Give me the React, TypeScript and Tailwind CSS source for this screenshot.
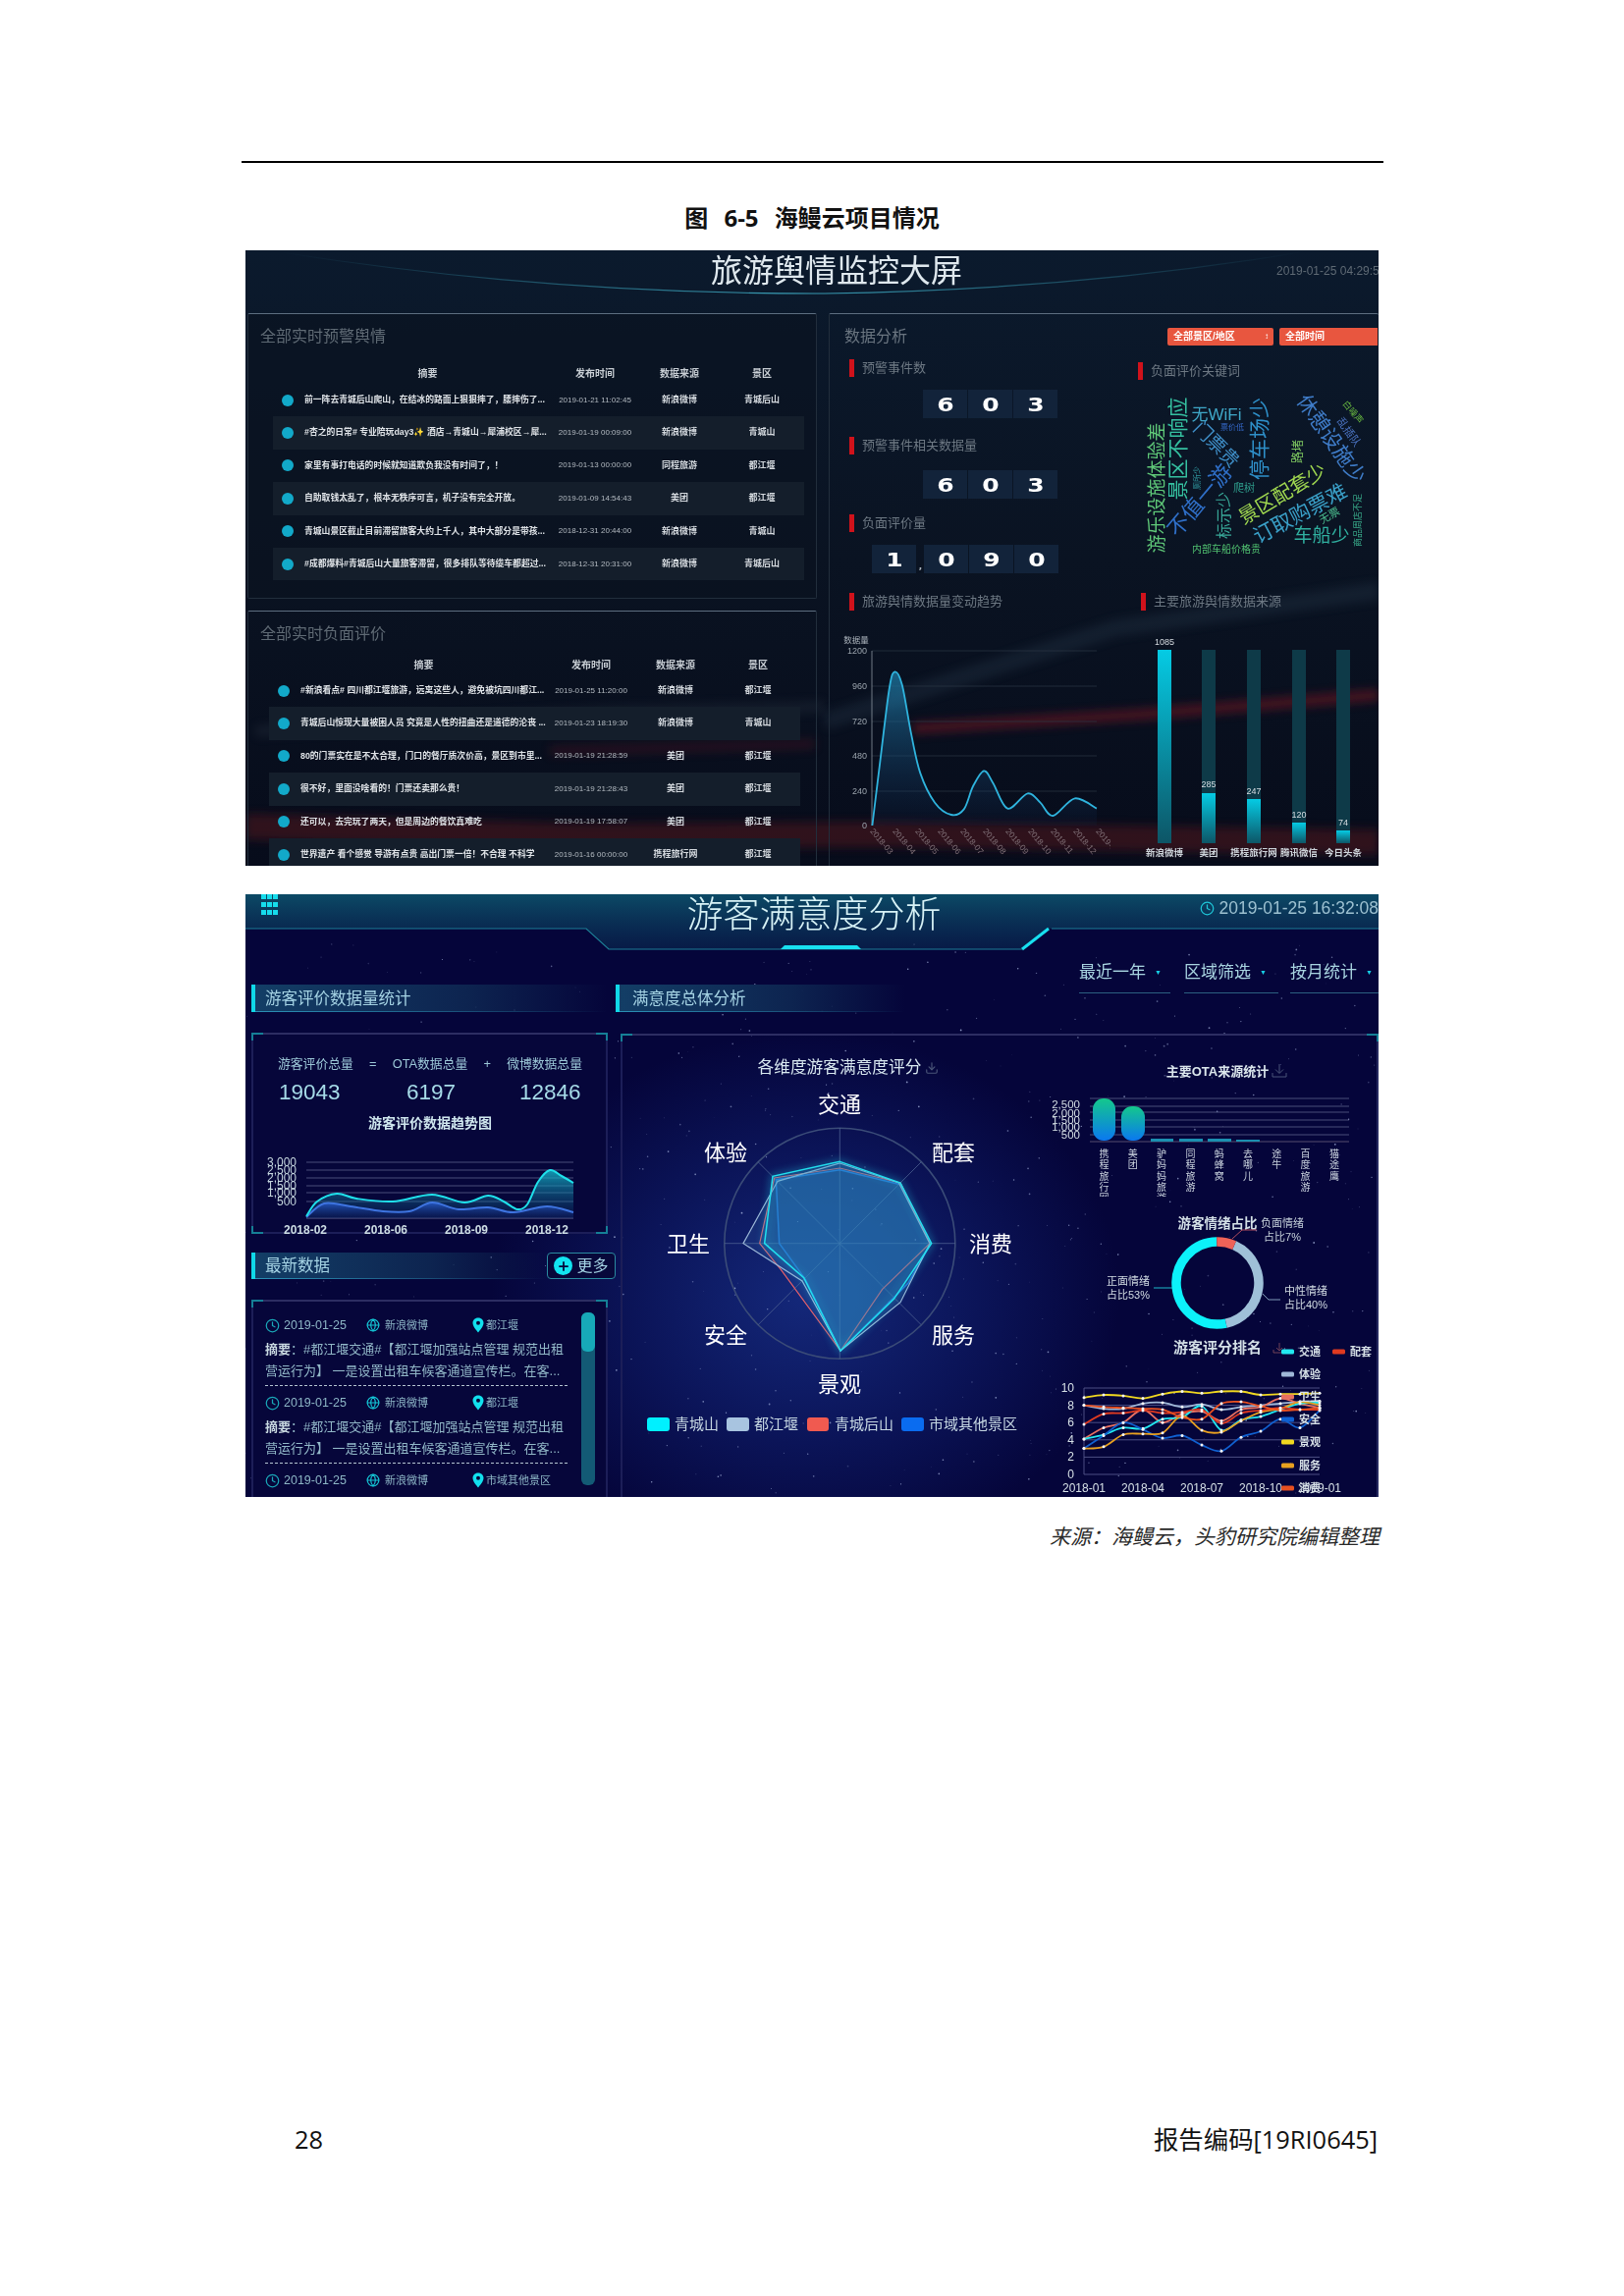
import React from "react";
import { Clock, Globe, Plus, Download } from "lucide-react";

type Pt = [number, number];

// catmull-rom through the points, good enough for echarts style smooth lines
function smooth(pts: Pt[]) {
  let d = `M${pts[0][0]} ${pts[0][1]}`;
  for (let i = 0; i < pts.length - 1; i++) {
    const p0 = pts[i - 1] || pts[i];
    const p1 = pts[i];
    const p2 = pts[i + 1];
    const p3 = pts[i + 2] || p2;
    const c1x = p1[0] + (p2[0] - p0[0]) / 6;
    const c1y = p1[1] + (p2[1] - p0[1]) / 6;
    const c2x = p2[0] - (p3[0] - p1[0]) / 6;
    const c2y = p2[1] - (p3[1] - p1[1]) / 6;
    d += ` C${c1x} ${c1y} ${c2x} ${c2y} ${p2[0]} ${p2[1]}`;
  }
  return d;
}

const warnRows = [
  ["前一阵去青城后山爬山，在结冰的路面上狠狠摔了，腰摔伤了...", "2019-01-21 11:02:45", "新浪微博", "青城后山"],
  ["#杏之的日常# 专业陪玩day3✨ 酒店→青城山→犀浦校区→犀...", "2019-01-19 00:09:00", "新浪微博", "青城山"],
  ["家里有事打电话的时候就知道欺负我没有时间了，！", "2019-01-13 00:00:00", "同程旅游", "都江堰"],
  ["自助取钱太乱了，根本无秩序可言，机子没有完全开放。", "2019-01-09 14:54:43", "美团", "都江堰"],
  ["青城山景区截止目前滞留旅客大约上千人，其中大部分是带孩...", "2018-12-31 20:44:00", "新浪微博", "青城山"],
  ["#成都爆料#青城后山大量旅客滞留，很多排队等待缆车都超过...", "2018-12-31 20:31:00", "新浪微博", "青城后山"],
];

const negRows = [
  ["#新浪看点# 四川都江堰旅游，远离这些人，避免被坑四川都江...", "2019-01-25 11:20:00", "新浪微博", "都江堰"],
  ["青城后山惊现大量被困人员 究竟是人性的扭曲还是道德的沦丧 ...", "2019-01-23 18:19:30", "新浪微博", "青城山"],
  ["80的门票实在是不太合理，门口的餐厅质次价高，景区到市里...", "2019-01-19 21:28:59", "美团", "都江堰"],
  ["很不好，里面没啥看的！门票还卖那么贵！", "2019-01-19 21:28:43", "美团", "都江堰"],
  ["还可以，去完玩了两天，但是周边的餐饮真难吃", "2019-01-19 17:58:07", "美团", "都江堰"],
  ["世界遗产 看个感觉 导游有点贵 高出门票一倍！不合理 不科学", "2019-01-16 00:00:00", "携程旅行网", "都江堰"],
];

const cloud: { t: string; x: number; y: number; s: number; r: number; c: string }[] = [
  { t: "游乐设施体验差", x: 1177, y: 497, s: 19, r: -90, c: "#5fc878" },
  { t: "景区不响应", x: 1198, y: 457, s: 21, r: -90, c: "#35c0a0" },
  { t: "无WiFi", x: 1238, y: 422, s: 17, r: 0, c: "#3fa8c8" },
  { t: "票价低", x: 1254, y: 435, s: 8, r: 0, c: "#3468c8" },
  { t: "门票贵", x: 1238, y: 453, s: 19, r: 45, c: "#3f8fc8" },
  { t: "不值一游", x: 1221, y: 510, s: 22, r: -50, c: "#2f6fc8" },
  { t: "标示少", x: 1245, y: 525, s: 16, r: -90, c: "#38a898" },
  { t: "厕所少", x: 1218, y: 487, s: 8, r: -90, c: "#3098a0" },
  { t: "爬树", x: 1266, y: 497, s: 11, r: 0, c: "#2e9a8a" },
  { t: "停车场少", x: 1281, y: 447, s: 21, r: -90, c: "#2e8fc8" },
  { t: "路堵", x: 1321, y: 460, s: 12, r: -90, c: "#7ec860" },
  { t: "休憩设施少", x: 1355, y: 447, s: 21, r: 55, c: "#3f7cc8" },
  { t: "乱插队", x: 1373, y: 440, s: 11, r: 55, c: "#4a72c0" },
  { t: "白噪声", x: 1377, y: 420, s: 9, r: 50, c: "#68b840" },
  { t: "景区配套少", x: 1305, y: 503, s: 20, r: -31, c: "#a0d850" },
  { t: "订取购票难", x: 1323, y: 523, s: 21, r: -28, c: "#3aa0c8" },
  { t: "无票", x: 1353, y: 525, s: 11, r: -30, c: "#4cc090" },
  { t: "车船少", x: 1345, y: 545, s: 19, r: 0, c: "#30b0a0" },
  { t: "内部车船价格贵", x: 1248, y: 559, s: 10, r: 0, c: "#50c070" },
  { t: "商品周店不足", x: 1382, y: 530, s: 9, r: -90, c: "#38a888" },
];

const trendZoom: Pt[] = [
  [128, 720], [150, 520], [175, 300], [190, 250], [210, 290], [235, 440], [260, 560], [300, 650], [345, 687],
  [380, 670], [405, 600], [435, 553], [460, 590], [500, 668], [555, 622], [590, 650], [625, 690], [685, 637], [745, 668],
];
const trendPts: Pt[] = trendZoom.map(([x, y]) => [840 + x / 2.7, 600 + y / 3]);

const sourceBars = [
  { name: "新浪微博", v: "1085", x: 1185, top: 661, ly: 656 },
  { name: "美团", v: "285", x: 1230, top: 807, ly: 801 },
  { name: "携程旅行网", v: "247", x: 1276, top: 813, ly: 808 },
  { name: "腾讯微信", v: "120", x: 1322, top: 837, ly: 832 },
  { name: "今日头条", v: "74", x: 1367, top: 845, ly: 840 },
];

const trendMonths = ["2018-03", "2018-04", "2018-05", "2018-06", "2018-07", "2018-08", "2018-09", "2018-10", "2018-11", "2018-12", "2019-01"];

const scoreSeries: { c: string; v: number[] }[] = [
  { c: "#f0d820", v: [8.9, 9.2, 9.1, 8.8, 9.3, 9.6, 9.4, 9.6, 9.6, 9.2, 9.3, 9.3, 9.4] },
  { c: "#a0b8d8", v: [8, 7.6, 7.6, 8.2, 8.3, 7.8, 8.1, 7.5, 7.8, 8, 8.2, 8.4, 8.5] },
  { c: "#e87060", v: [4.1, 5.4, 6, 7.5, 6, 7, 7.3, 6.2, 7.5, 7.8, 8.8, 8.2, 7.7] },
  { c: "#22e8f0", v: [4.1, 4.6, 5.4, 5.3, 6.4, 6.6, 7.9, 5.1, 6.3, 6.7, 7.5, 8.2, 8.3] },
  { c: "#1060d0", v: [3, 4.5, 6, 5.2, 4.2, 4.5, 3.4, 2.7, 4.3, 5, 6.4, 5.4, 7.4] },
  { c: "#e8a020", v: [3, 3.2, 4.6, 4.7, 4.8, 6.8, 5.1, 4.9, 6.2, 7.2, 7.6, 8.4, 8] },
  { c: "#e03a20", v: [5.8, 7, 7.1, 7.4, 7.1, 7.2, 7.5, 5.9, 7.1, 7.4, 7.7, 7.5, 7.5] },
  { c: "#e85020", v: [8, 7.8, 7.7, 7.6, 7.5, 6.6, 6.4, 8.2, 8.4, 7.9, 7.4, 7.5, 7.7] },
];

const scoreLegend = [
  { t: "交通", x: 1303, y: 1377, c: "#22e8f0" },
  { t: "配套", x: 1355, y: 1377, c: "#e03a20" },
  { t: "体验", x: 1303, y: 1400, c: "#a0b8d8" },
  { t: "卫生", x: 1303, y: 1423, c: "#e87060" },
  { t: "安全", x: 1303, y: 1446, c: "#1060d0" },
  { t: "景观", x: 1303, y: 1469, c: "#f0d820" },
  { t: "服务", x: 1303, y: 1493, c: "#e8a020" },
  { t: "消费", x: 1303, y: 1516, c: "#e85020" },
];

const radarLabels = [
  { t: "交通", x: 853, y: 1125 },
  { t: "配套", x: 969, y: 1174 },
  { t: "消费", x: 1007, y: 1267 },
  { t: "服务", x: 969, y: 1360 },
  { t: "景观", x: 853, y: 1410 },
  { t: "安全", x: 737, y: 1360 },
  { t: "卫生", x: 699, y: 1267 },
  { t: "体验", x: 737, y: 1174 },
];

const radarShapes: { c: string; w: number; fill: string; p: Pt[] }[] = [
  { c: "#1f6fe0", w: 1.5, fill: "#2f6fc0", p: [[670, 455], [855, 500], [948, 680], [880, 800], [672, 1008], [565, 790], [485, 680], [475, 485]] },
  { c: "#e8606a", w: 1.2, fill: "#2f6fc0", p: [[670, 450], [855, 495], [945, 680], [800, 820], [672, 1008], [490, 760], [425, 680], [470, 480]] },
  { c: "#9db8d8", w: 1.2, fill: "#3c78b8", p: [[670, 435], [850, 495], [945, 680], [855, 860], [672, 1008], [555, 795], [375, 680], [480, 490]] },
  { c: "#22dfee", w: 1.5, fill: "#2f78b0", p: [[670, 430], [855, 495], [950, 680], [835, 850], [672, 1008], [560, 785], [440, 680], [465, 475]] },
];

const radarPoints = (p: Pt[]) => p.map(([x, y]) => `${630 + x / 3},${1040 + y / 3}`).join(" ");

const otaLabels = ["携程旅行网", "美团", "驴妈妈旅游", "同程旅游", "蚂蜂窝", "去哪儿", "途牛", "百度旅游", "猫途鹰"];

const cyanCurve: Pt[] = [
  [312, 1237], [323, 1222], [343, 1214], [363, 1219], [400, 1222], [440, 1215], [473, 1223], [497, 1216], [513, 1222], [527, 1230],
  [537, 1225], [548, 1202], [560, 1190], [572, 1196], [584, 1203],
];
const blueCurve: Pt[] = [
  [312, 1238], [330, 1224], [357, 1227], [390, 1232], [417, 1232], [440, 1223], [467, 1230], [497, 1228], [523, 1233], [557, 1227], [584, 1233],
];

const feedItems = [
  { place: "都江堰" },
  { place: "都江堰" },
  { place: "市域其他景区" },
];

// seeded stars so every render gives the same sky
const stars: { x: number; y: number; r: number; o: number }[] = [];
let seed = 7;
const rnd = () => {
  seed = (seed * 16807) % 2147483647;
  return seed / 2147483647;
};
for (let i = 0; i < 620; i++) {
  stars.push({ x: rnd() * 1154, y: 50 + rnd() * 564, r: 0.3 + rnd() * 0.6, o: 0.2 + rnd() * 0.55 });
}

function Panel({ className, children }: { className?: string; children: React.ReactNode }) {
  return (
    <div className={`rounded-[2px] border border-[#222e3c] border-t-[#5d6e80] ${className || ""}`}>{children}</div>
  );
}

function RowsTable({ rows, rowClass, headGap }: { rows: string[][]; rowClass: string; headGap: string }) {
  const cols = "grid grid-cols-[32px_251px_90px_82px_86px] items-center";
  return (
    <div className={rowClass}>
      <div className={`${cols} h-[16px] text-[10px] font-bold text-[#c8ced4] text-center`}>
        <span />
        <span>摘要</span>
        <span>发布时间</span>
        <span>数据来源</span>
        <span>景区</span>
      </div>
      <div className={headGap}>
        {rows.map((r, i) => (
          <div key={i} className={`${cols} h-[33.4px] text-[9px] text-[#d4d9de] text-center ${i % 2 === 1 ? "bg-[#141e2b]" : ""}`}>
            <span className="ml-[9px] w-[12px] h-[12px] rounded-full bg-[#12a9c9]" />
            <span className="text-left truncate font-bold text-[8.8px] text-[#dfe3e7]">{r[0]}</span>
            <span className="text-[8px] text-[#b4bbc2]">{r[1]}</span>
            <span className="font-bold">{r[2]}</span>
            <span className="font-bold">{r[3]}</span>
          </div>
        ))}
      </div>
    </div>
  );
}

function SubHead({ label, className }: { label: string; className?: string }) {
  return (
    <div className={`flex items-center gap-[8px] text-[13px] text-[#6d7883] ${className || ""}`}>
      <span className="w-[5px] h-[18px] bg-[#d0121b]" />
      <span>{label}</span>
    </div>
  );
}

function Digits({ value, className }: { value: string; className?: string }) {
  return (
    <div className={`flex items-end font-[DejaVu_Sans,sans-serif] font-bold text-[20px] text-white ${className || ""}`}>
      {value.split("").map((d, i) =>
        d === "," ? (
          <span key={i} className="w-[7px] text-[9px] text-center text-[#aab4bd]">,</span>
        ) : (
          <span key={i} className="w-[45px] h-[29px] mr-[1px] flex items-center justify-center bg-[#12233a]">
            <span className="scale-x-[1.25]">{d}</span>
          </span>
        )
      )}
    </div>
  );
}

function SectionHead({ label, className }: { label: string; className?: string }) {
  return (
    <div className={`flex items-center border-l-[4px] border-l-[#10d8e8] bg-[linear-gradient(to_right,#2a8fb5,transparent),linear-gradient(to_right,#133e66,#0d2450_60%,transparent)] bg-[length:100%_1px,100%_100%] bg-[position:bottom,center] bg-no-repeat text-[16.5px] text-[#a5d3e4] ${className || ""}`}>
      {label}
    </div>
  );
}

function Frame({ className, children }: { className?: string; children: React.ReactNode }) {
  return (
    <div className={`relative border-2 border-[#1c1e58] border-t-[#2c2d62] ${className || ""}`}>
      <span className="absolute -top-[2px] -left-[2px] w-[12px] h-[8px] border-t-2 border-l-2 border-[#157f96]" />
      <span className="absolute -top-[2px] -right-[2px] w-[12px] h-[8px] border-t-2 border-r-2 border-[#157f96]" />
      <span className="absolute -bottom-[2px] -left-[2px] w-[12px] h-[8px] border-b-2 border-l-2 border-[#157f96]" />
      <span className="absolute -bottom-[2px] -right-[2px] w-[12px] h-[8px] border-b-2 border-r-2 border-[#157f96]" />
      {children}
    </div>
  );
}

function Pin() {
  return (
    <svg width="14" height="16" viewBox="0 0 14 16">
      <path d="M7 0.5C3.6 0.5 1.5 3 1.5 5.8 1.5 9.2 5 13 7 15.5 9 13 12.5 9.2 12.5 5.8 12.5 3 10.4 0.5 7 0.5Z" fill="#12e0ee" />
      <circle cx="7" cy="5.8" r="2" fill="#07083a" />
    </svg>
  );
}

function Filter({ label, className }: { label: string; className: string }) {
  return (
    <div className={`h-[31px] border-b border-b-[#2b5f80] flex items-start gap-[9px] text-[17px] leading-[20px] text-[#a8d4e0] ${className}`}>
      <span className="whitespace-nowrap">{label}</span>
      <span className="text-[7px] leading-[20px] text-[#16cfe6]">▼</span>
    </div>
  );
}

function polar(cx: number, cy: number, r: number, deg: number): Pt {
  const a = ((deg - 90) * Math.PI) / 180;
  return [cx + r * Math.cos(a), cy + r * Math.sin(a)];
}

function arc(start: number, end: number) {
  const [x1, y1] = polar(1238, 1307, 42, start);
  const [x2, y2] = polar(1238, 1307, 42, end);
  return `M${x1} ${y1} A42 42 0 ${end - start > 180 ? 1 : 0} 1 ${x2} ${y2}`;
}

function MonitorBoard() {
  return (
    <div className="relative w-[1154px] h-[627px] overflow-hidden bg-gradient-to-b from-[#0b1a2d] via-[#0a1322] to-[#070c1b] blur-[0.35px] font-[Liberation_Sans,Noto_Sans_CJK_SC,sans-serif]">
      {/* streaks behind everything */}
      <svg className="absolute inset-0 pointer-events-none" width="1154" height="627" viewBox="250 255 1154 627">
        <defs>
          <filter id="soft" x="-20%" y="-200%" width="140%" height="500%">
            <feGaussianBlur stdDeviation="5" />
          </filter>
          <linearGradient id="head-line" x1="0" x2="1" y1="0" y2="0">
            <stop offset="0" stopColor="#2a7a90" stopOpacity="0" />
            <stop offset="0.5" stopColor="#3aa0b8" />
            <stop offset="1" stopColor="#2a7a90" stopOpacity="0" />
          </linearGradient>
        </defs>
        <path d="M286 257Q560 300 840 299Q1100 295 1330 256" fill="none" stroke="url(#head-line)" strokeWidth="1.2" />
        <path d="M840 735L1136 640L1404 602" stroke="#2c3d4f" strokeWidth="18" fill="none" opacity="0.3" filter="url(#soft)" />
        <path d="M260 745L620 725L840 720" stroke="#3a4654" strokeWidth="12" fill="none" opacity="0.22" filter="url(#soft)" />
        <path d="M930 742L1160 728L1404 708" stroke="#6c1522" strokeWidth="12" fill="none" opacity="0.6" filter="url(#soft)" />
        <path d="M560 765L830 758" stroke="#5a1420" strokeWidth="10" fill="none" opacity="0.35" filter="url(#soft)" />
        <path d="M250 842L600 852L900 850L1404 858" stroke="#4c121e" strokeWidth="26" fill="none" opacity="0.6" filter="url(#soft)" />
      </svg>

      <div className="relative">
        <div className="h-[42px] flex items-center pl-[474px] pr-0">
          <h2 className="w-[256px] whitespace-nowrap text-[32px] font-normal leading-none text-[#dfe8ee]">旅游舆情监控大屏</h2>
          <span className="ml-[320px] whitespace-nowrap text-[12px] text-[#5f6a74]">2019-01-25 04:29:5</span>
        </div>

        <div className="mt-[22px] flex">
          <div className="w-[594px] pl-[2px]">
            <Panel className="w-[580px] h-[291px] pt-[12px] bg-[#0a1220]/60">
              <div className="pl-[12px] h-[22px] leading-[22px] text-[16px] text-[#5f6a74]">全部实时预警舆情</div>
              <RowsTable rows={warnRows} rowClass="ml-[25px] mt-[18px] w-[541px]" headGap="mt-[3px]" />
            </Panel>
            <Panel className="w-[580px] h-[280px] mt-[12px] pt-[12px]">
              <div className="pl-[12px] h-[22px] leading-[22px] text-[16px] text-[#5f6a74]">全部实时负面评价</div>
              <RowsTable rows={negRows} rowClass="ml-[21px] mt-[12px] w-[541px]" headGap="mt-[2px]" />
            </Panel>
          </div>

          <Panel className="w-[560px] h-[580px] border-r-0">
            <div className="pt-[13px] h-[32px] flex items-center">
              <span className="ml-[15px] text-[16px] text-[#6a7580]">数据分析</span>
              <span className="ml-[265px] w-[108px] h-[18px] pl-[6px] pr-[5px] flex items-center justify-between rounded-[2px] bg-[#e8563f] text-[10px] font-bold text-white">
                全部景区/地区<span className="text-[8px]">↕</span>
              </span>
              <span className="ml-[6px] w-[100px] h-[18px] pl-[6px] flex items-center rounded-l-[2px] bg-[#e8563f] text-[10px] font-bold text-white">全部时间</span>
            </div>

            <div className="grid grid-cols-[314px_1fr]">
              <div className="pl-[20px]">
                <SubHead label="预警事件数" className="mt-[14px] h-[18px]" />
                <Digits value="603" className="mt-[13px] ml-[75px]" />
                <SubHead label="预警事件相关数据量" className="mt-[19px] h-[18px]" />
                <Digits value="603" className="mt-[16px] ml-[75px]" />
                <SubHead label="负面评价量" className="mt-[16px] h-[18px]" />
                <Digits value="1,090" className="mt-[13px] ml-[23px]" />
              </div>
              <div>
                <SubHead label="负面评价关键词" className="mt-[17px] h-[18px]" />
                <svg className="mt-[8px] -ml-[8px]" width="246" height="180" viewBox="1150 395 246 180">
                  {cloud.map((w) => (
                    <text key={w.t} x={w.x} y={w.y} fontSize={w.s} fill={w.c} textAnchor="middle" dominantBaseline="central" transform={`rotate(${w.r} ${w.x} ${w.y})`}>
                      {w.t}
                    </text>
                  ))}
                </svg>
              </div>
            </div>

            <div className="grid grid-cols-[297px_1fr] mt-[20px] pl-[20px]">
              <div>
                <SubHead label="旅游舆情数据量变动趋势" className="h-[18px]" />
                <svg className="-ml-[24px] mt-[4px]" width="290" height="260" viewBox="840 625 290 260">
                  <defs>
                    <linearGradient id="trend-fill" x1="0" x2="0" y1="0" y2="1">
                      <stop offset="0" stopColor="#1e7ea8" stopOpacity="0.75" />
                      <stop offset="1" stopColor="#12305e" stopOpacity="0.1" />
                    </linearGradient>
                  </defs>
                  <text x="871" y="651" fontSize="8.5" fill="#aab2ba" textAnchor="middle" dominantBaseline="central">数据量</text>
                  {[["1200", 662], ["960", 698], ["720", 734], ["480", 769], ["240", 805], ["0", 840]].map(([t, y]) => (
                    <g key={t}>
                      <text x="882" y={y} fontSize="9" fill="#9aa3ac" textAnchor="end" dominantBaseline="central">{t}</text>
                      {t !== "0" && <line x1="887" x2="1116" y1={y} y2={y} stroke="#2d3846" strokeWidth="0.7" />}
                    </g>
                  ))}
                  <line x1="887" x2="887" y1="662" y2="840" stroke="#8b95a0" strokeWidth="0.8" />
                  <path d={`${smooth(trendPts)} L1116 840 L887 840Z`} fill="url(#trend-fill)" />
                  <path d={smooth(trendPts)} fill="none" stroke="#2fb4de" strokeWidth="1.8" />
                  {trendMonths.map((m, i) => (
                    <text key={m} x={887 + i * 23} y="844" fontSize="8.5" fill="#7f6f76" transform={`rotate(50 ${887 + i * 23} 844)`} dominantBaseline="central">
                      {m}
                    </text>
                  ))}
                </svg>
              </div>
              <div>
                <SubHead label="主要旅游舆情数据来源" className="h-[18px]" />
                <svg className="-ml-[21px] mt-[4px]" width="260" height="260" viewBox="1140 625 260 260">
                  <defs>
                    <linearGradient id="src-bar" x1="0" x2="0" y1="0" y2="1">
                      <stop offset="0" stopColor="#05cbe4" />
                      <stop offset="1" stopColor="#0d5566" />
                    </linearGradient>
                  </defs>
                  {sourceBars.map((b) => (
                    <g key={b.name}>
                      <rect x={b.x - 7} y="661" width="14" height="197" fill="#0e3a48" />
                      <rect x={b.x - 7} y={b.top} width="14" height={858 - b.top} fill="url(#src-bar)" />
                      <text x={b.x} y={b.ly} fontSize="9" fill="#d7dde2" textAnchor="middle">{b.v}</text>
                      <text x={b.x} y="867" fontSize="9.5" fontWeight="700" fill="#cdd4da" textAnchor="middle" dominantBaseline="central">{b.name}</text>
                    </g>
                  ))}
                </svg>
              </div>
            </div>
          </Panel>
        </div>
      </div>
    </div>
  );
}

function SatisfactionBoard() {
  return (
    <div className="relative w-[1154px] h-[614px] overflow-hidden bg-[#05053a] blur-[0.35px] font-[Liberation_Sans,Noto_Sans_CJK_SC,sans-serif]">
      <div className="absolute inset-0 bg-[radial-gradient(ellipse_320px_270px_at_570px_410px,#14287a_0%,#0b1458_55%,transparent_100%)]" />
      {/* header shape + star sky */}
      <svg className="absolute inset-0 pointer-events-none" width="1154" height="614" viewBox="250 911 1154 614">
        <defs>
          <linearGradient id="head-fill" x1="0" x2="0" y1="0" y2="1">
            <stop offset="0" stopColor="#0c4a66" />
            <stop offset="1" stopColor="#0a3054" stopOpacity="0.5" />
          </linearGradient>
        </defs>
        <path d="M250 911H1404V946H1068L1041 967H620L597 946H250Z" fill="url(#head-fill)" />
        <path d="M250 946H597L620 967H1041" fill="none" stroke="#1d7f96" strokeWidth="1.2" />
        <path d="M1071 946H1404" fill="none" stroke="#1d7f96" strokeWidth="1.2" />
        <path d="M1041 967L1068 946" fill="none" stroke="#18e0f0" strokeWidth="3" />
        <path d="M799 963H873L877 967H795Z" fill="#18e0f0" />
        {stars.map((s, i) => (
          <circle key={i} cx={250 + s.x} cy={911 + s.y} r={s.r} fill="#b8c6ee" opacity={s.o} />
        ))}
      </svg>

      <div className="relative">
        <div className="h-[70px] flex items-start">
          <div className="ml-[16px] grid grid-cols-3 gap-x-[3px] gap-y-[3px]">
            {[0, 1, 2, 3, 4, 5, 6, 7, 8].map((i) => (
              <span key={i} className="w-[5px] h-[5px] bg-[#16dcec]" />
            ))}
          </div>
          <h2 className="ml-[418px] mt-[2px] whitespace-nowrap text-[37px] leading-[40px] font-light text-[#d7f2f6]">游客满意度分析</h2>
          <div className="ml-[263px] mt-[5px] flex items-center gap-[5px] whitespace-nowrap text-[17.5px] leading-[18px] text-[#9cc0d0]">
            <Clock size={15} color="#1fc6d8" />
            <span>2019-01-25 16:32:08</span>
          </div>
        </div>

        <div className="flex">
          <div className="w-[377px] pl-[6px]">
            <SectionHead label="游客评价数据量统计" className="mt-[22px] w-[362px] h-[28px] pl-[10px]" />
            <Frame className="mt-[21px] w-[363px] h-[205px] pt-[20px] bg-[#06063a]">
              <div className="flex justify-between pl-[25px] pr-[24px] text-[12.8px] leading-[20px] text-[#9cc8d8] whitespace-nowrap">
                <span>游客评价总量</span>
                <span>=</span>
                <span>OTA数据总量</span>
                <span>+</span>
                <span>微博数据总量</span>
              </div>
              <div className="mt-[6px] h-[26px] flex text-[22.5px] leading-[26px] font-light text-[#a6dbe8]">
                <span className="ml-[26px] w-[130px]">19043</span>
                <span className="w-[115px]">6197</span>
                <span>12846</span>
              </div>
              <div className="mt-[8px] pl-[1px] text-center text-[14px] leading-[20px] font-bold text-[#cfe6ee]">游客评价数据趋势图</div>
              <svg className="mt-[6px] -ml-[2px]" width="363" height="100" viewBox="256 1158 363 100">
                <defs>
                  <linearGradient id="area-a" x1="0" x2="0" y1="0" y2="1">
                    <stop offset="0" stopColor="#16c8d8" stopOpacity="0.75" />
                    <stop offset="1" stopColor="#0d3a70" stopOpacity="0.2" />
                  </linearGradient>
                  <linearGradient id="area-b" x1="0" x2="0" y1="0" y2="1">
                    <stop offset="0" stopColor="#2a5ed0" stopOpacity="0.85" />
                    <stop offset="1" stopColor="#0d2060" stopOpacity="0.3" />
                  </linearGradient>
                </defs>
                {[["3,000", 1182], ["2,500", 1190], ["2,000", 1198], ["1,500", 1206], ["1,000", 1213], ["500", 1222]].map(([t, y]) => (
                  <g key={t}>
                    <line x1="312" x2="584" y1={y} y2={y} stroke="#5c5f8c" strokeWidth="0.8" />
                    <text x="302" y={Number(y) + 4} fontSize="12" fill="#c5d6de" textAnchor="end">{t}</text>
                  </g>
                ))}
                <line x1="312" x2="584" y1="1239" y2="1239" stroke="#5c5f8c" strokeWidth="1" />
                <path d={`${smooth(cyanCurve)} L584 1239 L312 1239Z`} fill="url(#area-a)" />
                <path d={`${smooth(blueCurve)} L584 1239 L312 1239Z`} fill="url(#area-b)" />
                <path d={smooth(blueCurve)} fill="none" stroke="#3e74e0" strokeWidth="2" />
                <path d={smooth(cyanCurve)} fill="none" stroke="#1fe0ea" strokeWidth="2" />
                {[["2018-02", 311], ["2018-06", 393], ["2018-09", 475], ["2018-12", 557]].map(([t, x]) => (
                  <text key={t} x={x} y="1255" fontSize="12" fontWeight="700" fill="#cddde4" textAnchor="middle">{t}</text>
                ))}
              </svg>
            </Frame>

            <div className="mt-[19px] flex w-[371px] h-[27px]">
              <SectionHead label="最新数据" className="w-[301px] pl-[10px]" />
              <div className="w-[70px] flex items-center justify-center gap-[4px] rounded-[4px] border border-[#2a8aa0] text-[16px] text-[#a5d3e4] bg-[#07083a]">
                <span className="w-[19px] h-[19px] rounded-full bg-[#12e4f0] flex items-center justify-center">
                  <Plus size={14} color="#06063a" strokeWidth={3} />
                </span>
                更多
              </div>
            </div>

            <Frame className="mt-[21px] w-[363px] h-[230px] pl-[12px] pt-[14px] flex items-start bg-[#06063a]">
              <div className="w-[308px]">
                {feedItems.map((it, i) => (
                  <div key={i} className="mb-[7px]">
                    <div className="h-[20px] flex items-center text-[11px] text-[#8db6c6]">
                      <span className="w-[103px] flex items-center gap-[4px] text-[12.5px]">
                        <Clock size={15} color="#1aa8b8" />
                        2019-01-25
                      </span>
                      <span className="w-[107px] flex items-center gap-[5px]">
                        <Globe size={14} color="#14c4d4" />
                        新浪微博
                      </span>
                      <span className="flex items-center gap-[1px]">
                        <Pin />
                        {it.place}
                      </span>
                    </div>
                    {i < 2 && (
                      <div className="mt-[4px] pb-[3px] border-b border-dashed border-b-[#b5c4d2] text-[13px] leading-[22px] text-[#92b8c8] whitespace-nowrap">
                        <div>
                          <b className="text-[#c8d8e0]">摘要</b>：#都江堰交通#【都江堰加强站点管理 规范出租
                        </div>
                        <div>营运行为】 一是设置出租车候客通道宣传栏。在客...</div>
                      </div>
                    )}
                  </div>
                ))}
              </div>
              <div className="ml-[14px] -mt-[3px] w-[14px] h-[176px] rounded-[6px] bg-[#135a75]">
                <div className="w-[14px] h-[40px] rounded-[6px] bg-[#17a9b8]" />
              </div>
            </Frame>
          </div>

          <div className="w-[777px]">
            <div className="h-[50px] flex">
              <SectionHead label="满意度总体分析" className="mt-[22px] w-[300px] h-[28px] pl-[13px]" />
              <div className="ml-[177px] flex">
                <Filter label="最近一年" className="w-[93px]" />
                <Filter label="区域筛选" className="w-[96px] ml-[14px]" />
                <Filter label="按月统计" className="w-[90px] ml-[12px]" />
              </div>
            </div>

            <Frame className="ml-[5px] mt-[22px] h-[500px] flex border-r-[#262a60]">
              <div className="w-[430px]">
                <div className="pl-[30px] pt-[21px] h-[45px] text-center text-[16.7px] leading-[24px] text-[#d8e8f0] flex items-start justify-center gap-[4px]">
                  各维度游客满意度评分
                  <Download size={14} color="#4a5578" className="mt-[5px]" />
                </div>
                <svg width="430" height="330" viewBox="632 1100 430 330">
                  <circle cx="853.3" cy="1266.7" r="117.5" fill="none" stroke="#3b4c78" strokeWidth="1.6" />
                  <line x1="853.3" x2="853.3" y1="1149" y2="1384" stroke="#4c6090" strokeWidth="0.8" />
                  <line x1="736" x2="971" y1="1266.7" y2="1266.7" stroke="#4c6090" strokeWidth="0.8" />
                  <line x1="770" x2="936.4" y1="1183.6" y2="1349.8" stroke="#4c6090" strokeWidth="0.8" />
                  <line x1="936.4" x2="770" y1="1183.6" y2="1349.8" stroke="#4c6090" strokeWidth="0.8" />
                  {radarShapes.map((s, i) => (
                    <polygon key={i} points={radarPoints(s.p)} fill={s.fill} fillOpacity="0.17" stroke={s.c} strokeWidth={s.w} className={i === 3 ? "drop-shadow-[0_0_4px_#22d3ee]" : ""} />
                  ))}
                  {radarLabels.map((l) => (
                    <text key={l.t} x={l.x} y={l.y} fontSize="22" fill="#ffffff" textAnchor="middle" dominantBaseline="central">{l.t}</text>
                  ))}
                </svg>
                <div className="mt-[11px] h-[20px] flex items-center text-[15px] text-[#c5d6e2] whitespace-nowrap">
                  <span className="ml-[25px] w-[23px] h-[14px] rounded-[3px] bg-[#00f0ff]" />
                  <span className="ml-[5px] w-[53px]">青城山</span>
                  <span className="w-[23px] h-[14px] rounded-[3px] bg-[#a8c4e0]" />
                  <span className="ml-[5px] w-[54px]">都江堰</span>
                  <span className="w-[22px] h-[14px] rounded-[3px] bg-[#f05a50]" />
                  <span className="ml-[6px] w-[68px]">青城后山</span>
                  <span className="w-[23px] h-[14px] rounded-[3px] bg-[#0a6cf0]" />
                  <span className="ml-[5px]">市域其他景区</span>
                </div>
              </div>

              <div className="w-[338px] flex flex-col">
                <svg width="338" height="168" viewBox="1062 1055 338 168">
                  <defs>
                    <linearGradient id="capsule" x1="0" x2="0" y1="0" y2="1">
                      <stop offset="0" stopColor="#14c88c" />
                      <stop offset="1" stopColor="#0a78f0" />
                    </linearGradient>
                    <clipPath id="ota-clip">
                      <rect x="1062" y="1165" width="338" height="54" />
                    </clipPath>
                  </defs>
                  <text x="1238" y="1091" fontSize="13" fontWeight="700" fill="#dbe6ec" textAnchor="middle" dominantBaseline="central">主要OTA来源统计</text>
                  <g transform="translate(1294 1084)" stroke="#4a5578" fill="none" strokeWidth="1">
                    <path d="M7 0V9M3 5.5L7 9.5L11 5.5M0 9V13H14V9" />
                  </g>
                  {[1119, 1127, 1133, 1141, 1148, 1156].map((y) => (
                    <line key={y} x1="1108" x2="1372" y1={y} y2={y} stroke="#5c5f8c" strokeWidth="0.8" />
                  ))}
                  {[["2,500", 1125], ["2,000", 1134], ["1,500", 1141], ["1,000", 1148], ["500", 1156]].map(([t, y]) => (
                    <text key={t} x="1098" y={Number(y) + 4} fontSize="11.5" fill="#d4dee4" textAnchor="end">{t}</text>
                  ))}
                  <line x1="1108" x2="1372" y1="1163" y2="1163" stroke="#6a5f7c" strokeWidth="0.8" />
                  <rect x="1111" y="1119" width="23" height="43" rx="11" fill="url(#capsule)" />
                  <rect x="1140" y="1127" width="24" height="35" rx="11" fill="url(#capsule)" />
                  <rect x="1170" y="1160" width="23" height="3" fill="#1b8fb0" />
                  <rect x="1199" y="1160" width="24" height="3" fill="#1b8fb0" />
                  <rect x="1228" y="1160" width="24" height="3" fill="#1b8fb0" />
                  <rect x="1257" y="1161" width="24" height="2" fill="#1b8fb0" />
                  <g clipPath="url(#ota-clip)">
                    {otaLabels.map((name, i) =>
                      name.split("").map((ch, j) => (
                        <text key={`${i}-${j}`} x={1122.5 + i * 29.3} y={1175.5 + j * 11.3} fontSize="10" fill="#cad3de" textAnchor="middle" dominantBaseline="central">{ch}</text>
                      ))
                    )}
                  </g>
                </svg>

                <svg width="338" height="132" viewBox="1062 1223 338 132">
                  <text x="1238" y="1246" fontSize="13.5" fontWeight="700" fill="#d3dfe6" textAnchor="middle" dominantBaseline="central">游客情绪占比</text>
                  <text x="1304" y="1246" fontSize="11" fill="#c5d0da" textAnchor="middle" dominantBaseline="central">负面情绪</text>
                  <text x="1304" y="1260" fontSize="11" fill="#c5d0da" textAnchor="middle" dominantBaseline="central">占比7%</text>
                  <path d="M1253 1262L1263 1253H1278" fill="none" stroke="#e0606a" strokeWidth="0.8" />
                  <path d={arc(168, 359)} fill="none" stroke="#0cf2fa" strokeWidth="9.5" />
                  <path d={arc(24, 168)} fill="none" stroke="#9fc0d8" strokeWidth="9.5" />
                  <path d={arc(-1, 24)} fill="none" stroke="#ee6258" strokeWidth="9.5" />
                  <text x="1147" y="1305" fontSize="11" fill="#d3dde4" textAnchor="middle" dominantBaseline="central">正面情绪</text>
                  <text x="1147" y="1319" fontSize="11" fill="#d3dde4" textAnchor="middle" dominantBaseline="central">占比53%</text>
                  <path d="M1173 1312H1192" fill="none" stroke="#22e8f0" strokeWidth="0.8" />
                  <text x="1328" y="1315" fontSize="11" fill="#d3dde4" textAnchor="middle" dominantBaseline="central">中性情绪</text>
                  <text x="1328" y="1329" fontSize="11" fill="#d3dde4" textAnchor="middle" dominantBaseline="central">占比40%</text>
                  <path d="M1284 1318L1290 1324H1302" fill="none" stroke="#9fc0d8" strokeWidth="0.8" />
                </svg>

                <svg width="338" height="170" viewBox="1062 1355 338 170">
                  <text x="1238" y="1372" fontSize="15" fontWeight="700" fill="#d3dfe6" textAnchor="middle" dominantBaseline="central">游客评分排名</text>
                  <g transform="translate(1295 1368)" stroke="#8a5060" fill="none" strokeWidth="0.8">
                    <path d="M6 0V7M3 5L6 8L9 5M0 7V10H12V7" />
                  </g>
                  {[10, 8, 6, 4, 2, 0].map((v) => {
                    const y = 1502 - v * 8.8;
                    return (
                      <g key={v}>
                        <line x1="1102" x2="1342" y1={y} y2={y} stroke="#55588c" strokeWidth="0.9" />
                        <text x="1092" y={y} fontSize="12" fill="#d6e0e6" textAnchor="end" dominantBaseline="central">{v}</text>
                      </g>
                    );
                  })}
                  <line x1="1102" x2="1102" y1="1414" y2="1502" stroke="#55588c" strokeWidth="0.9" />
                  {scoreSeries.map((s, i) => {
                    const pts: Pt[] = s.v.map((v, j) => [1102 + j * 20, 1502 - v * 8.8]);
                    return (
                      <g key={i}>
                        <path d={smooth(pts)} fill="none" stroke={s.c} strokeWidth="1.8" />
                        {pts.map((p, j) => (
                          <circle key={j} cx={p[0]} cy={p[1]} r="1.5" fill="#f4f6f8" />
                        ))}
                      </g>
                    );
                  })}
                  {[["2018-01", 1102], ["2018-04", 1162], ["2018-07", 1222], ["2018-10", 1282], ["2019-01", 1342]].map(([t, x]) => (
                    <text key={t} x={x} y="1516" fontSize="12" fill="#d6e0e6" textAnchor="middle" dominantBaseline="central">{t}</text>
                  ))}
                  {scoreLegend.map((l) => (
                    <g key={l.t}>
                      <rect x={l.x} y={l.y - 2.5} width="13" height="5" rx="1.5" fill={l.c} />
                      <text x={l.x + 18} y={l.y} fontSize="11" fontWeight="700" fill="#d6e0e6" dominantBaseline="central">{l.t}</text>
                    </g>
                  ))}
                </svg>
              </div>
            </Frame>
          </div>
        </div>
      </div>
    </div>
  );
}

export default function App() {
  return (
    <div className="w-[1654px] h-[2339px] bg-white pt-[164px] font-[Open_Sans,Noto_Sans_CJK_SC,sans-serif] text-[#111]">
      <div className="ml-[246px] w-[1163px] h-[2px] bg-black" />
      <div className="mt-[40px] h-[32px] leading-[32px] text-center text-[24px] font-bold [word-spacing:10px]">图 6-5 海鳗云项目情况</div>
      <div className="mt-[17px] ml-[250px]">
        <MonitorBoard />
      </div>
      <div className="mt-[29px] ml-[250px]">
        <SatisfactionBoard />
      </div>
      <div className="mt-[25px] pr-[249px] h-[30px] leading-[30px] text-right text-[21px] italic font-normal text-[#2a2a2a]">来源：海鳗云，头豹研究院编辑整理</div>
      <div className="mt-[582px] pl-[300px] pr-[251px] flex justify-between text-[25.4px] leading-[34px]">
        <span>28</span>
        <span>报告编码[19RI0645]</span>
      </div>
    </div>
  );
}
